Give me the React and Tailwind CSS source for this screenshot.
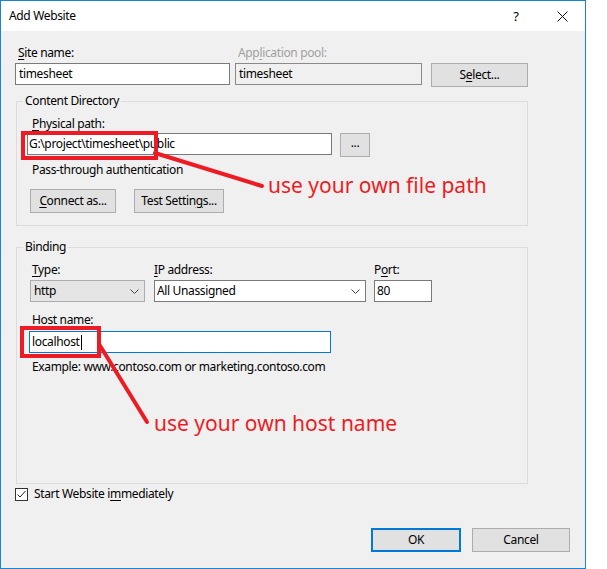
const U = ({ children }) => <span className="underline underline-offset-[2px] decoration-[1px]">{children}</span>;

function Btn({ children, className = "" }) {
  return (
    <div className={"h-[24px] flex items-center justify-center bg-[#e1e1e1] border border-[#adadad] " + className}>
      {children}
    </div>
  );
}

function Chevron() {
  return (
    <svg width="9" height="5" viewBox="0 0 9 5" className="shrink-0">
      <polyline points="0.5,0.5 4.5,4.5 8.5,0.5" fill="none" stroke="#444" strokeWidth="1" />
    </svg>
  );
}

export default function App() {
  return (
    <div className="relative w-[607px] h-[569px] bg-white text-[12px] leading-[16px] tracking-[-0.35px] text-black [font-family:'Noto_Sans',sans-serif] overflow-hidden">
      <div className="w-[586px] h-[569px] border border-[#1883d7] bg-[#f0f0f0] flex flex-col">
        {/* Title bar */}
        <div className="h-[30px] bg-white flex items-center pl-[8px] shrink-0">
          <span className="text-[12px]">Add Website</span>
          <div className="ml-auto flex h-full">
            <div className="w-[46px] flex items-center justify-center text-[13px]">?</div>
            <div className="w-[46px] flex items-center justify-center">
              <svg width="11" height="11" viewBox="0 0 11 11">
                <path d="M0.5 0.5 L10.5 10.5 M10.5 0.5 L0.5 10.5" stroke="#111" strokeWidth="1" />
              </svg>
            </div>
          </div>
        </div>

        {/* Body */}
        <div className="px-[14px] flex flex-col">
          {/* Row 1 */}
          <div className="mt-[14px] flex">
            <div className="w-[215px] flex flex-col">
              <div className="pl-[3px] h-[16px]"><U>S</U>ite name:</div>
              <div className="mt-[2px] h-[22px] border border-[#7a7a7a] bg-white flex items-center px-[3px]">timesheet</div>
            </div>
            <div className="ml-[5px] w-[187px] flex flex-col">
              <div className="pl-[3px] h-[16px] text-[#a0a0a0]">App<U>l</U>ication pool:</div>
              <div className="mt-[2px] h-[22px] border border-[#8a8a8a] bg-[#f0f0f0] flex items-center px-[3px]">timesheet</div>
            </div>
            <div className="ml-[9px] flex flex-col">
              <div className="h-[16px]" />
              <Btn className="mt-[2px] w-[97px]">S<U>e</U>lect...</Btn>
            </div>
          </div>

          {/* Content Directory */}
          <fieldset className="mt-[6px] ml-[1px] w-[512px] border border-[#dcdcdc] p-0 m-0">
            <legend className="ml-[6px] px-[2px] leading-[16px]">Content Directory</legend>
            <div className="pl-[10px] pb-[12px] flex flex-col">
              <div className="mt-[7px] pl-[5px] h-[16px]"><U>P</U>hysical path:</div>
              <div className="mt-[1px] flex items-start">
                <div className="w-[305px] h-[22px] border border-[#7a7a7a] bg-white flex items-center px-[1px]">G:\project\timesheet\public</div>
                <Btn className="ml-[8px] w-[30px]"><span className="-mt-[4px]">...</span></Btn>
              </div>
              <div className="mt-[5px] pl-[5px] h-[16px]">Pass-through authentication</div>
              <div className="mt-[11px] flex">
                <Btn className="ml-[3px] w-[86px]"><U>C</U>onnect as...</Btn>
                <Btn className="ml-[18px] w-[90px]">Test Settin<U>g</U>s...</Btn>
              </div>
            </div>
          </fieldset>

          {/* Binding */}
          <fieldset className="mt-[13px] ml-[1px] w-[512px] border border-[#dcdcdc] p-0 m-0">
            <legend className="ml-[6px] px-[2px] leading-[16px]">Binding</legend>
            <div className="pl-[13px] flex flex-col pb-[108px]">
              <div className="mt-[7px] flex">
                <div className="w-[115px] flex flex-col">
                  <div className="pl-[2px] h-[16px]"><U>T</U>ype:</div>
                  <div className="mt-[2px] h-[22px] border border-[#adadad] bg-[#e5e5e5] flex items-center pl-[3px] pr-[5px]">
                    <span>http</span>
                    <span className="ml-auto"><Chevron /></span>
                  </div>
                </div>
                <div className="ml-[9px] w-[212px] flex flex-col">
                  <div className="h-[16px]"><U>I</U>P address:</div>
                  <div className="mt-[2px] h-[22px] border border-[#7a7a7a] bg-white flex items-center pl-[2px] pr-[5px]">
                    <span>All Unassigned</span>
                    <span className="ml-auto"><Chevron /></span>
                  </div>
                </div>
                <div className="ml-[8px] w-[58px] flex flex-col">
                  <div className="h-[16px]">P<U>o</U>rt:</div>
                  <div className="mt-[2px] h-[22px] border border-[#7a7a7a] bg-white flex items-center px-[2px]">80</div>
                </div>
              </div>
              <div className="mt-[10px] pl-[2px] h-[16px]">Host name:</div>
              <div className="mt-[3px] -ml-[1px] w-[302px] h-[22px] border border-[#0078d7] bg-white flex items-center px-[2px]">
                <span>localhost</span>
                <span className="w-[1px] h-[15px] bg-black ml-[1px]" />
              </div>
              <div className="mt-[6px] pl-[2px] h-[16px]">Example: www.contoso.com or marketing.contoso.com</div>
            </div>
          </fieldset>

          {/* Checkbox */}
          <div className="mt-[2px] flex items-center h-[16px]">
            <div className="w-[13px] h-[13px] border border-[#333] bg-white flex items-center justify-center">
              <svg width="11" height="11" viewBox="0 0 11 11">
                <polyline points="1.5,5.5 4,8 9.5,2" fill="none" stroke="#222" strokeWidth="1" />
              </svg>
            </div>
            <span className="ml-[6px]">Start Website i<U>m</U>mediately</span>
          </div>

          {/* Buttons */}
          <div className="mt-[26px] flex justify-end pr-[1px]">
            <Btn className="w-[90px] !border-2 !border-[#0078d7]">OK</Btn>
            <Btn className="ml-[11px] w-[98px]">Cancel</Btn>
          </div>
        </div>
      </div>

      {/* Annotations */}
      <svg className="absolute inset-0 pointer-events-none" width="607" height="569" viewBox="0 0 607 569">
        <rect x="23" y="133" width="133" height="25" fill="none" stroke="#ed1c24" strokeWidth="4" />
        <path d="M155 153 L262 186" stroke="#ed1c24" strokeWidth="4" strokeLinecap="round" />
        <rect x="22" y="328" width="77" height="28" fill="none" stroke="#ed1c24" strokeWidth="4" />
        <path d="M99 344 L147 422" stroke="#ed1c24" strokeWidth="4" strokeLinecap="round" />
      </svg>
      <div className="absolute left-[268px] top-[172px] text-[21px] leading-[26px] tracking-normal text-[#ed1c24] pointer-events-none">use your own file path</div>
      <div className="absolute left-[154px] top-[410px] text-[21px] leading-[26px] tracking-normal text-[#ed1c24] pointer-events-none">use your own host name</div>
    </div>
  );
}
